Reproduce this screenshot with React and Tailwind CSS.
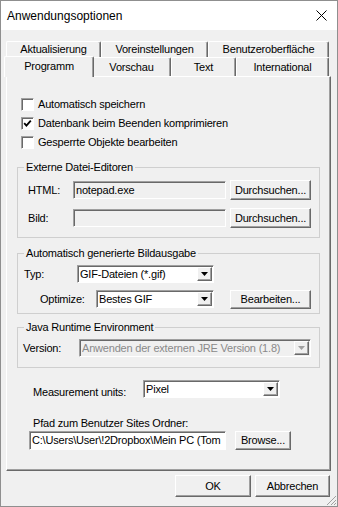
import React from "react";

/* classic win32 look */
const raised =
  "border border-t-white border-l-white border-r-[#696969] border-b-[#696969] shadow-[inset_-1px_-1px_0_#a0a0a0] bg-[#f0f0f0]";
const sunken =
  "border border-t-[#a0a0a0] border-l-[#a0a0a0] border-r-white border-b-white shadow-[inset_1px_1px_0_#696969]";

const Btn = ({ className = "", children }) => (
  <div className={`${raised} flex items-center justify-center ${className}`}>
    {children}
  </div>
);

const Arrow = ({ disabled }) => (
  <div className={`${raised} w-[15px] h-full flex items-center justify-center shrink-0`}>
    <svg width="7" height="4" viewBox="0 0 7 4">
      <polygon points="0,0 7,0 3.5,4" fill={disabled ? "#a0a0a0" : "#000"} />
    </svg>
  </div>
);

const Select = ({ value, className = "", disabled }) => (
  <div
    className={`${sunken} ${disabled ? "bg-[#f0f0f0] text-[#8a8a8a]" : "bg-white"} flex items-stretch p-[1px] pl-[2px] ${className}`}
  >
    <span className="flex-1 flex items-center truncate">{value}</span>
    <Arrow disabled={disabled} />
  </div>
);

const Check = ({ checked, label }) => (
  <div className="h-[18px] flex items-center pl-[14px]">
    <div className={`${sunken} w-[13px] h-[13px] bg-white flex items-center justify-center`}>
      {checked && (
        <svg width="9" height="9" viewBox="0 0 9 9">
          <polyline points="1.2,4.2 3.4,6.6 7.8,1.6" fill="none" stroke="#000" strokeWidth="1.8" />
        </svg>
      )}
    </div>
    <span className="ml-[4px]">{label}</span>
  </div>
);

const Tab = ({ label, className = "", selected }) => (
  <div
    className={`flex items-center justify-center border-t border-l border-r border-t-white border-l-white border-r-[#696969] rounded-t-[2px] bg-[#f0f0f0] shadow-[inset_-1px_0_0_#a0a0a0] ${
      selected ? "relative z-10 -mx-[2px] h-[21px] -mb-[1px] pb-[2px]" : "h-[19px]"
    } ${className}`}
  >
    {label}
  </div>
);

const Group = ({ title, className = "", children }) => (
  <fieldset className={`ml-[10px] w-[303px] border border-[#cfcfcf] ${className}`}>
    <legend className="ml-[6px] px-[2px] leading-[14px]">{title}</legend>
    {children}
  </fieldset>
);

export default function App() {
  return (
    <div className="relative w-[338px] h-[507px] border border-[#8f8f8f] bg-[#f0f0f0] text-[11px] tracking-[-0.2px] text-black font-['Liberation_Sans',Arial,sans-serif] overflow-hidden">
      {/* title bar */}
      <div className="h-[29px] bg-white flex items-center justify-between pl-[6px] pr-[10px]">
        <span className="text-[12px] tracking-normal">Anwendungsoptionen</span>
        <svg width="11" height="11" viewBox="0 0 11 11">
          <line x1="0.5" y1="0.5" x2="10.5" y2="10.5" stroke="#000" strokeWidth="1" />
          <line x1="10.5" y1="0.5" x2="0.5" y2="10.5" stroke="#000" strokeWidth="1" />
        </svg>
      </div>

      {/* tabs */}
      <div className="mt-[11px] pl-[5px]">
        <div className="flex h-[16px] items-start">
          <Tab label="Aktualisierung" className="w-[95px] !h-[16px]" />
          <Tab label="Voreinstellungen" className="w-[107px] !h-[16px]" />
          <Tab label="Benutzeroberfläche" className="w-[121px] !h-[16px]" />
        </div>
        <div className="flex items-end h-[19px]">
          <Tab label="Programm" className="w-[90px]" selected />
          <Tab label="Vorschau" className="w-[79px]" />
          <Tab label="Text" className="w-[65px]" />
          <Tab label="International" className="w-[93px]" />
        </div>
      </div>

      {/* panel */}
      <div className="ml-[5px] w-[325px] border border-t-white border-l-white border-r-[#696969] border-b-[#696969] shadow-[inset_-1px_-1px_0_#a0a0a0] pt-[18px] pb-[20px]">
        <div className="flex flex-col gap-[1px]">
          <Check label="Automatisch speichern" />
          <Check checked label="Datenbank beim Beenden komprimieren" />
          <Check label="Gesperrte Objekte bearbeiten" />
        </div>

        <Group title="Externe Datei-Editoren" className="mt-[9px] pt-[6px] pb-[9px]">
          <div className="flex items-center h-[20px] pl-[10px]">
            <span className="w-[45px]">HTML:</span>
            <div className={`${sunken} w-[153px] h-[18px] bg-[#f0f0f0] flex items-center pl-[2px]`}>notepad.exe</div>
            <Btn className="ml-[4px] w-[81px] h-[20px]">Durchsuchen...</Btn>
          </div>
          <div className="flex items-center h-[20px] pl-[10px] mt-[8px]">
            <span className="w-[45px]">Bild:</span>
            <div className={`${sunken} w-[153px] h-[18px] bg-[#f0f0f0]`} />
            <Btn className="ml-[4px] w-[81px] h-[20px]">Durchsuchen...</Btn>
          </div>
        </Group>

        <Group title="Automatisch generierte Bildausgabe" className="mt-[8px] pt-[5px] pb-[5px]">
          <div className="flex items-center h-[18px] pl-[6px]">
            <span className="w-[53px]">Typ:</span>
            <Select value="GIF-Dateien (*.gif)" className="w-[137px] h-[18px]" />
          </div>
          <div className="flex items-center h-[18px] pl-[22px] mt-[7px]">
            <span className="w-[56px]">Optimize:</span>
            <Select value="Bestes GIF" className="w-[118px] h-[18px]" />
            <Btn className="ml-[16px] w-[81px] h-[19px]">Bearbeiten...</Btn>
          </div>
        </Group>

        <Group title="Java Runtime Environment" className="mt-[6px] pt-[5px] pb-[10px]">
          <div className="flex items-center h-[18px] pl-[5px]">
            <span className="w-[56px]">Version:</span>
            <Select disabled value="Anwenden der externen JRE Version (1.8)" className="w-[232px] h-[18px]" />
          </div>
        </Group>

        <div className="flex items-start mt-[12px] pl-[26px]">
          <span className="w-[110px] leading-[18px] mt-[3px]">Measurement units:</span>
          <Select value="Pixel" className="w-[137px] h-[18px]" />
        </div>

        <div className="pl-[26px] mt-[16px] leading-[13px]">Pfad zum Benutzer Sites Ordner:</div>
        <div className="flex items-center mt-[1px] pl-[22px] h-[19px]">
          <div className={`${sunken} w-[197px] h-[19px] bg-white flex items-center pl-[2px] overflow-hidden whitespace-nowrap`}>
            C:\Users\User\!2Dropbox\Mein PC (Tom
          </div>
          <Btn className="ml-[9px] w-[56px] h-[19px]">Browse...</Btn>
        </div>
      </div>

      {/* footer */}
      <div className="flex justify-end gap-[4px] pr-[7px] mt-[4px]">
        <Btn className="w-[76px] h-[22px]">OK</Btn>
        <Btn className="w-[75px] h-[22px]">Abbrechen</Btn>
      </div>

      {/* resize grip */}
      <svg className="absolute right-0 bottom-0" width="12" height="12" viewBox="0 0 12 12">
        <line x1="11" y1="2" x2="2" y2="11" stroke="#a0a0a0" />
        <line x1="11" y1="6" x2="6" y2="11" stroke="#a0a0a0" />
        <line x1="11" y1="9" x2="9" y2="11" stroke="#a0a0a0" />
      </svg>
    </div>
  );
}
